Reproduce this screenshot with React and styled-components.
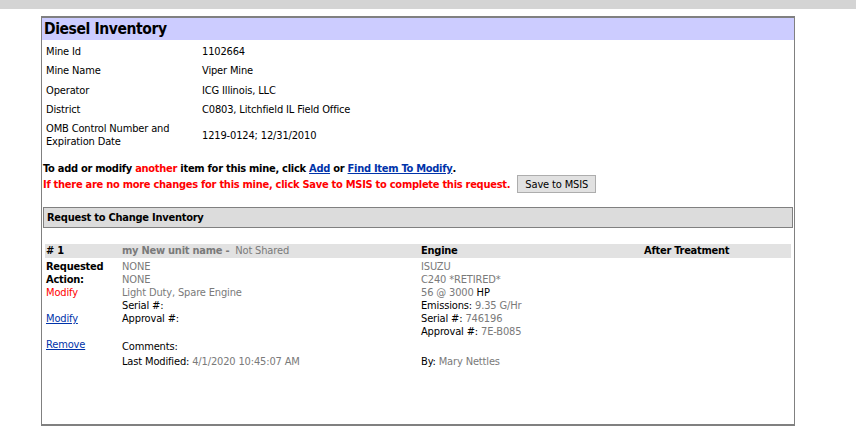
import styled, { createGlobalStyle } from "styled-components";

const Global = createGlobalStyle`
  body {
    margin: 0;
    background: #fff;
    font-family: "DejaVu Sans Condensed", "DejaVu Sans", sans-serif;
    font-size: 11px;
    letter-spacing: -0.15px;
    color: #000;
  }
`;

const TopBar = styled.div`
  height: 9px;
  background: #d4d4d4;
`;

const Panel = styled.div`
  box-sizing: border-box;
  width: 754px;
  height: 410px;
  margin: 7px 0 0 41px;
  border: 1px solid #808080;
  border-top-width: 2px;
  border-bottom-width: 2px;
`;

const Title = styled.h1`
  margin: 0;
  height: 22px;
  line-height: 23px;
  padding: 0 2px;
  background: #ccccff;
  font-size: 15.5px;
  letter-spacing: -0.4px;
  font-weight: bold;
`;

const Info = styled.div`
  display: grid;
  grid-template-columns: 156px 1fr;
  padding: 2px 4px 0;
`;

const InfoCell = styled.div`
  display: flex;
  align-items: center;
  min-height: 19.3px;
  line-height: 13px;
  padding: ${(p) => (p.$tall ? "3px 0 1px" : "0")};
`;

const Notes = styled.div`
  padding: 12px 1px 0;
  font-weight: bold;
  letter-spacing: -0.27px;
`;

const NoteLine = styled.div`
  display: flex;
  align-items: center;
  color: ${(p) => p.$color || "#000"};
  height: ${(p) => p.$h || 14}px;
`;

const Red = styled.span`
  color: #ff0000;
`;

const Link = styled.a`
  color: #0033aa;
  text-decoration: underline;
  cursor: pointer;
`;

const Button = styled.button`
  margin-left: 7px;
  width: 79px;
  height: 18px;
  padding: 0;
  border: 1px solid #adadad;
  background: #e1e1e1;
  font-family: inherit;
  font-size: 11px;
  letter-spacing: -0.15px;
  font-weight: normal;
  color: #000;
`;

const Section = styled.div`
  margin: 14px 1px 0;
  height: 21px;
  box-sizing: border-box;
  border: 1px solid #808080;
  background: #dcdcdc;
  padding: 0 3px;
  line-height: 19px;
  font-weight: bold;
  letter-spacing: -0.25px;
`;

const Items = styled.div`
  margin: 16px 3px 0;
`;

const Row = styled.div`
  display: grid;
  grid-template-columns: 76px 299px 223px 1fr;
  padding-left: 1px;
  background: ${(p) => p.$bg || "transparent"};
  line-height: ${(p) => p.$lh || 13}px;
  margin-top: ${(p) => p.$mt || 0}px;
`;

const Col = styled.div`
  display: flex;
  flex-direction: column;
`;

const Line = styled.div`
  min-height: 13px;
  margin-top: ${(p) => p.$mt || 0}px;
  font-weight: ${(p) => (p.$bold ? "bold" : "normal")};
  letter-spacing: ${(p) => (p.$bold ? "-0.25px" : "inherit")};
  color: ${(p) => p.$color || "#000"};
`;

const Grey = styled.span`
  color: #7a7a7a;
  font-weight: ${(p) => (p.$bold ? "bold" : "normal")};
  letter-spacing: ${(p) => (p.$bold ? "-0.25px" : "inherit")};
`;

const info = [
  ["Mine Id", "1102664"],
  ["Mine Name", "Viper Mine"],
  ["Operator", "ICG Illinois, LLC"],
  ["District", "C0803, Litchfield IL Field Office"],
];

export default function App() {
  return (
    <>
      <Global />
      <TopBar />
      <Panel>
        <Title>Diesel Inventory</Title>
        <Info>
          {info.map(([k, v]) => [
            <InfoCell key={k}>{k}</InfoCell>,
            <InfoCell key={k + "v"}>{v}</InfoCell>,
          ])}
          <InfoCell $tall>
            OMB Control Number and
            <br />
            Expiration Date
          </InfoCell>
          <InfoCell $tall>1219-0124; 12/31/2010</InfoCell>
        </Info>

        <Notes>
          <NoteLine>
            To add or modify&nbsp;<Red>another</Red>&nbsp;item for this mine, click&nbsp;
            <Link>Add</Link>&nbsp;or&nbsp;<Link>Find Item To Modify</Link>.
          </NoteLine>
          <NoteLine $color="#ff0000" $h={18}>
            If there are no more changes for this mine, click Save to MSIS to complete this request.
            <Button>Save to MSIS</Button>
          </NoteLine>
        </Notes>

        <Section>Request to Change Inventory</Section>

        <Items>
          <Row $bg="#e2e2e2" $lh={14}>
            <Line $bold># 1</Line>
            <Line>
              <Grey $bold>my New unit name -</Grey>&nbsp; <Grey>Not Shared</Grey>
            </Line>
            <Line $bold>Engine</Line>
            <Line $bold>After Treatment</Line>
          </Row>
          <Row $mt={2}>
            <Col>
              <Line $bold>Requested</Line>
              <Line $bold>Action:</Line>
              <Line $color="#ff0000">Modify</Line>
              <Line $mt={13}>
                <Link>Modify</Link>
              </Line>
              <Line $mt={13}>
                <Link>Remove</Link>
              </Line>
            </Col>
            <Col>
              <Line><Grey>NONE</Grey></Line>
              <Line><Grey>NONE</Grey></Line>
              <Line><Grey>Light Duty, Spare Engine</Grey></Line>
              <Line>Serial #:</Line>
              <Line>Approval #:</Line>
              <Line $mt={15}>Comments:</Line>
            </Col>
            <Col>
              <Line><Grey>ISUZU</Grey></Line>
              <Line><Grey>C240 *RETIRED*</Grey></Line>
              <Line><Grey>56 @ 3000</Grey> HP</Line>
              <Line>Emissions: <Grey>9.35 G/Hr</Grey></Line>
              <Line>Serial #: <Grey>746196</Grey></Line>
              <Line>Approval #: <Grey>7E-B085</Grey></Line>
            </Col>
            <Col />
          </Row>
          <Row $mt={2}>
            <Col />
            <Line>Last Modified: <Grey>4/1/2020 10:45:07 AM</Grey></Line>
            <Line>By: <Grey>Mary Nettles</Grey></Line>
            <Col />
          </Row>
        </Items>
      </Panel>
    </>
  );
}
